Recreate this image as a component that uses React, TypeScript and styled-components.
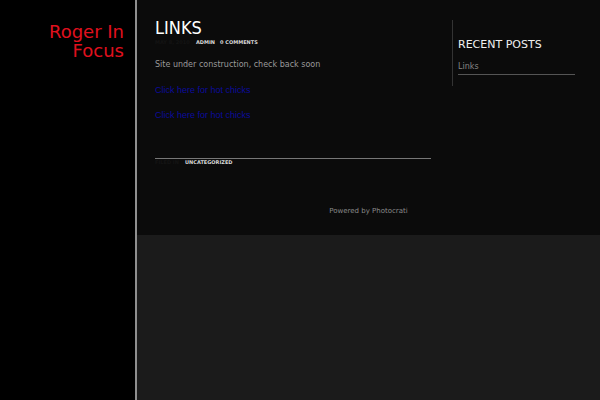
import React from "react";
import styled, { createGlobalStyle } from "styled-components";

const Global = createGlobalStyle`
  html, body { margin: 0; padding: 0; background: #1b1b1b; }
  body { font-family: "DejaVu Sans", sans-serif; }
`;

const Page = styled.div`
  display: flex;
  min-height: 400px;
`;

const Brand = styled.header`
  width: 137px;
  flex: none;
  box-sizing: border-box;
  background: #000;
  border-right: 2px solid #8f8f8f;
  padding: 22px 11px 0 0;
  text-align: right;
`;

const BrandTitle = styled.h1`
  margin: 0;
  font-family: "DejaVu Sans", sans-serif;
  font-weight: normal;
  font-size: 18px;
  line-height: 19px;
  color: #e0101e;
`;

const Main = styled.div`
  flex: 1;
  display: flex;
  flex-direction: column;
`;

const Stage = styled.div`
  height: 235px;
  background: #0b0b0b;
  display: flex;
  flex-direction: column;
`;

const Columns = styled.div`
  display: flex;
  padding-left: 18px;
  gap: 21px;
`;

const Content = styled.article`
  width: 276px;
  padding-top: 18px;
`;

const PostTitle = styled.h2`
  margin: 0;
  font-family: "DejaVu Sans Condensed", "DejaVu Sans", sans-serif;
  font-weight: normal;
  font-size: 18px;
  line-height: 20px;
  color: #fff;
`;

const Meta = styled.div`
  display: flex;
  gap: 5px;
  font-family: "DejaVu Sans", sans-serif;
  font-weight: bold;
  font-size: 5px;
  line-height: 8px;
  text-transform: uppercase;
  color: #d8d8d8;
`;

const Hidden = styled.span<{ $w: number }>`
  color: #141414;
  min-width: ${(p) => p.$w}px;
  white-space: nowrap;
`;

const Body = styled.p`
  margin: 13px 0 0;
  font-family: "DejaVu Sans", sans-serif;
  font-size: 8px;
  line-height: 12px;
  color: #9a9a9a;
`;

const LinkPara = styled.p<{ $gap: number }>`
  margin: ${(p) => p.$gap}px 0 0;
  font-family: "Liberation Sans", Arial, sans-serif;
  font-size: 9px;
  line-height: 12px;
`;

const A = styled.a`
  color: #0b0b9c;
  text-decoration: none;
`;

const Rule = styled.hr`
  margin: 37px 0 0;
  border: 0;
  border-top: 1px solid #777;
  height: 0;
`;

const Filed = styled(Meta)`
  line-height: 7px;
`;

const Sidebar = styled.aside`
  width: 123px;
  margin-top: 20px;
  height: 66px;
  box-sizing: border-box;
  border-left: 1px solid #333;
  padding-left: 5px;
`;

const WidgetTitle = styled.h3`
  margin: 18px 0 0;
  font-family: "DejaVu Sans", sans-serif;
  font-weight: normal;
  font-size: 11px;
  line-height: 14px;
  color: #f0f0f0;
  text-transform: uppercase;
`;

const WidgetList = styled.ul`
  list-style: none;
  margin: 9px 0 0;
  padding: 0;
`;

const WidgetItem = styled.li`
  font-family: "DejaVu Sans", sans-serif;
  font-size: 8px;
  line-height: 12px;
  color: #858585;
  padding-bottom: 1px;
  border-bottom: 1px solid #555;
`;

const Footer = styled.footer`
  margin-top: 40px;
  text-align: center;
  font-family: "DejaVu Sans", sans-serif;
  font-size: 7px;
  line-height: 10px;
  color: #8a8a8a;
`;

export default function App() {
  return (
    <>
      <Global />
      <Page>
        <Brand>
          <BrandTitle>
            Roger In
            <br />
            Focus
          </BrandTitle>
        </Brand>
        <Main>
          <Stage>
            <Columns>
              <Content>
                <PostTitle>LINKS</PostTitle>
                <Meta>
                  <Hidden $w={36}>May 8, 2010</Hidden>
                  <span>admin</span>
                  <span>0 Comments</span>
                </Meta>
                <Body>Site under construction, check back soon</Body>
                <LinkPara $gap={13}>
                  <A href="#">Click here for hot chicks</A>
                </LinkPara>
                <LinkPara $gap={13}>
                  <A href="#">Click here for hot chicks</A>
                </LinkPara>
                <Rule />
                <Filed>
                  <Hidden $w={25}>Filed in</Hidden>
                  <span>Uncategorized</span>
                </Filed>
              </Content>
              <Sidebar>
                <WidgetTitle>Recent Posts</WidgetTitle>
                <WidgetList>
                  <WidgetItem>Links</WidgetItem>
                </WidgetList>
              </Sidebar>
            </Columns>
            <Footer>Powered by Photocrati</Footer>
          </Stage>
        </Main>
      </Page>
    </>
  );
}
